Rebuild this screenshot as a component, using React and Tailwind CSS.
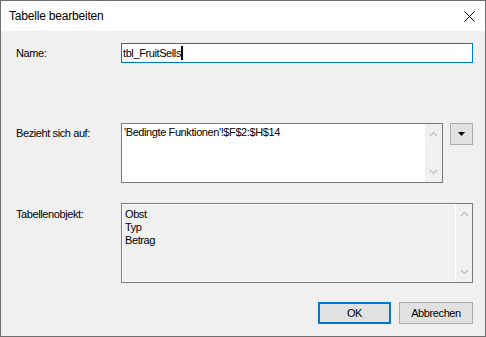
// Dialog "Tabelle bearbeiten" – WinForms-style table editor
import React from 'react';

const uiFont = { fontFamily: '"Liberation Sans", Arial, sans-serif' };

function Chevron({ up }) {
  return (
    <svg width="9" height="6" viewBox="0 0 9 6" className="block">
      <polyline
        points={up ? '1,5 4.5,1.5 8,5' : '1,1 4.5,4.5 8,1'}
        fill="none"
        stroke="#c2c2c2"
        strokeWidth="1.4"
      />
    </svg>
  );
}

function ScrollTrack({ className = '' }) {
  return (
    <div className={`w-[17px] h-full shrink-0 flex flex-col items-center justify-between py-[7px] bg-[#f0f0f0] ${className}`}>
      <Chevron up />
      <Chevron />
    </div>
  );
}

function Label({ children, className = '' }) {
  return (
    <div className={`w-[120px] shrink-0 pl-[15px] text-[11px] leading-[13px] text-black ${className}`}>
      {children}
    </div>
  );
}

export default function App() {
  return (
    <div
      className="w-[486px] h-[337px] flex flex-col border border-[#6f6f6f] bg-[#f0f0f0] text-black tracking-[-0.4px]"
      style={uiFont}
    >
      {/* Titelleiste */}
      <div className="h-[30px] bg-white flex items-center justify-between pl-[8px] pr-[10px]">
        <span className="text-[12px] leading-[14px] tracking-[-0.2px]">Tabelle bearbeiten</span>
        <svg width="11" height="11" viewBox="0 0 11 11">
          <path d="M0.5 0.5 L10.5 10.5 M10.5 0.5 L0.5 10.5" stroke="#000" strokeWidth="1" />
        </svg>
      </div>

      {/* Inhalt */}
      <div className="flex-1 flex flex-col pt-[12px]">
        <div className="flex">
          <Label className="pt-[4px]">Name:</Label>
          <div className="w-[352px] h-[20px] shrink-0 bg-white border border-[#0078d7] flex items-center pl-[1px] text-[11px]">
            <span>tbl_FruitSells</span>
            <span className="w-[2px] h-[14px] bg-black" />
          </div>
        </div>

        <div className="flex mt-[60px]">
          <Label className="pt-[4px]">Bezieht sich auf:</Label>
          <div className="w-[322px] h-[60px] shrink-0 bg-white border border-[#7a7a7a] flex">
            <div className="flex-1 px-[2px] pt-[2px] text-[11px] leading-[13px]">
              'Bedingte Funktionen'!$F$2:$H$14
            </div>
            <ScrollTrack />
          </div>
          <div className="ml-[7px] w-[23px] h-[22px] shrink-0 bg-[#e1e1e1] border border-[#adadad] flex items-center justify-center">
            <svg width="7" height="4" viewBox="0 0 7 4">
              <polygon points="0,0 7,0 3.5,4" fill="#000" />
            </svg>
          </div>
        </div>

        <div className="flex mt-[20px]">
          <Label className="pt-[5px]">Tabellenobjekt:</Label>
          <div className="w-[352px] h-[80px] shrink-0 bg-[#f0f0f0] border border-[#7a7a7a] flex">
            <div className="flex-1 px-[2px] pt-[3px] text-[11px] leading-[13px] border border-r-0 border-white">
              <div>Obst</div>
              <div>Typ</div>
              <div>Betrag</div>
            </div>
            <ScrollTrack className="border-l border-white" />
          </div>
        </div>

        <div className="flex justify-end gap-[8px] mt-[19px] pr-[12px]">
          <button className="w-[73px] h-[22px] bg-[#e1e1e1] border-2 border-[#0078d7] text-[11px] flex items-center justify-center">
            OK
          </button>
          <button className="w-[74px] h-[22px] bg-[#e1e1e1] border border-[#adadad] text-[11px] flex items-center justify-center">
            Abbrechen
          </button>
        </div>
      </div>
    </div>
  );
}
